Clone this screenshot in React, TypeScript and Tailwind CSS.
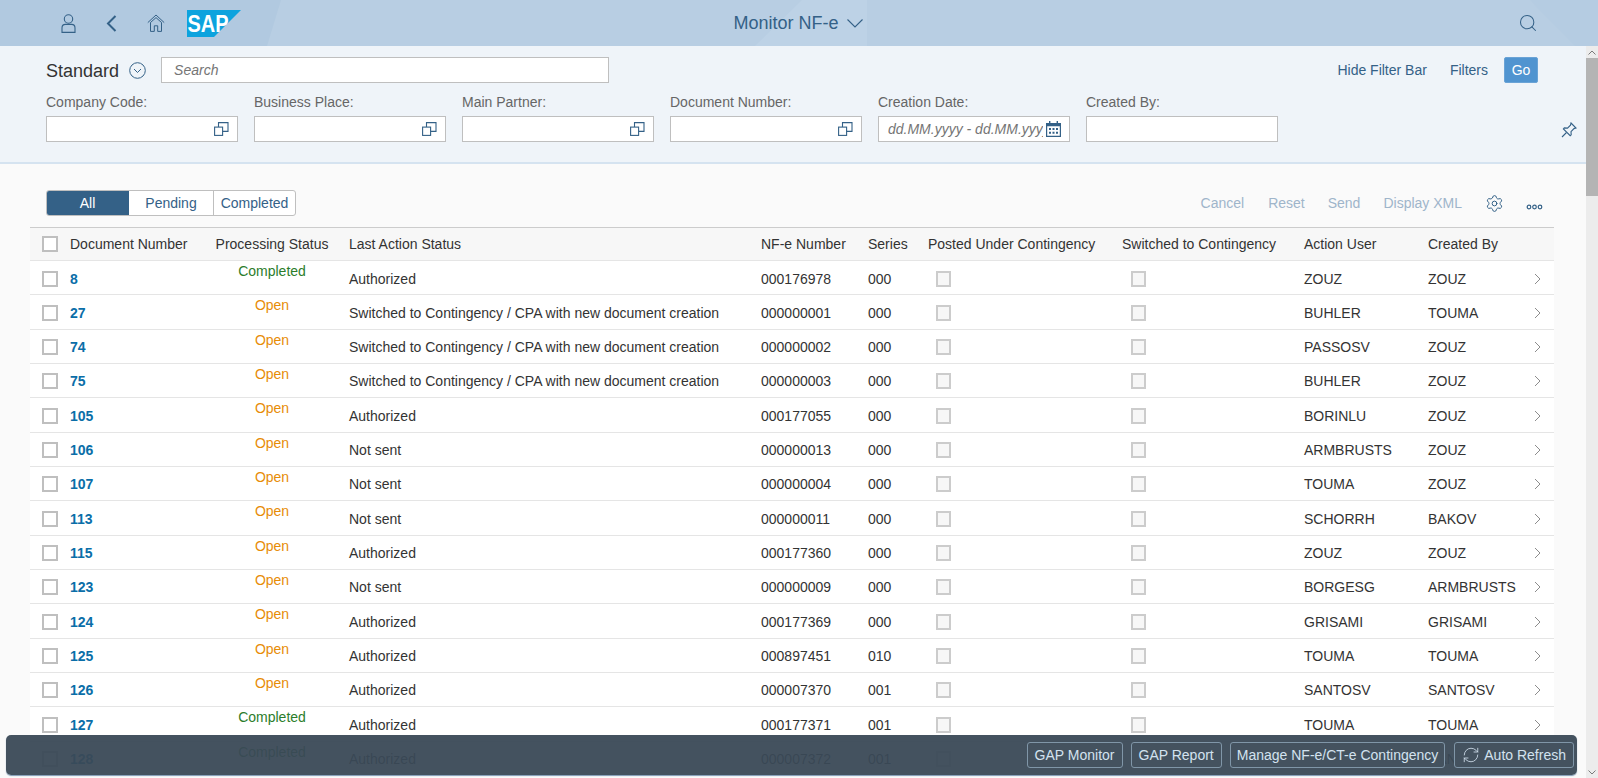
import { RefreshCw, Search, Settings } from 'lucide-react';

interface Row {
  doc: string;
  status: 'Open' | 'Completed';
  action: string;
  nfe: string;
  series: string;
  user: string;
  createdBy: string;
}

const CONT = 'Switched to Contingency / CPA with new document creation';

const rows: Row[] = [
  { doc: '8', status: 'Completed', action: 'Authorized', nfe: '000176978', series: '000', user: 'ZOUZ', createdBy: 'ZOUZ' },
  { doc: '27', status: 'Open', action: CONT, nfe: '000000001', series: '000', user: 'BUHLER', createdBy: 'TOUMA' },
  { doc: '74', status: 'Open', action: CONT, nfe: '000000002', series: '000', user: 'PASSOSV', createdBy: 'ZOUZ' },
  { doc: '75', status: 'Open', action: CONT, nfe: '000000003', series: '000', user: 'BUHLER', createdBy: 'ZOUZ' },
  { doc: '105', status: 'Open', action: 'Authorized', nfe: '000177055', series: '000', user: 'BORINLU', createdBy: 'ZOUZ' },
  { doc: '106', status: 'Open', action: 'Not sent', nfe: '000000013', series: '000', user: 'ARMBRUSTS', createdBy: 'ZOUZ' },
  { doc: '107', status: 'Open', action: 'Not sent', nfe: '000000004', series: '000', user: 'TOUMA', createdBy: 'ZOUZ' },
  { doc: '113', status: 'Open', action: 'Not sent', nfe: '000000011', series: '000', user: 'SCHORRH', createdBy: 'BAKOV' },
  { doc: '115', status: 'Open', action: 'Authorized', nfe: '000177360', series: '000', user: 'ZOUZ', createdBy: 'ZOUZ' },
  { doc: '123', status: 'Open', action: 'Not sent', nfe: '000000009', series: '000', user: 'BORGESG', createdBy: 'ARMBRUSTS' },
  { doc: '124', status: 'Open', action: 'Authorized', nfe: '000177369', series: '000', user: 'GRISAMI', createdBy: 'GRISAMI' },
  { doc: '125', status: 'Open', action: 'Authorized', nfe: '000897451', series: '010', user: 'TOUMA', createdBy: 'TOUMA' },
  { doc: '126', status: 'Open', action: 'Authorized', nfe: '000007370', series: '001', user: 'SANTOSV', createdBy: 'SANTOSV' },
  { doc: '127', status: 'Completed', action: 'Authorized', nfe: '000177371', series: '001', user: 'TOUMA', createdBy: 'TOUMA' },
  { doc: '128', status: 'Completed', action: 'Authorized', nfe: '000007372', series: '001', user: 'SANTOSV', createdBy: 'SANTOSV' },
];

const gridCols =
  'grid grid-cols-[40px_140px_124px_427px_107px_60px_194px_182px_124px_104px_22px] items-center';

function ValueHelpIcon() {
  return (
    <svg width="15" height="14" viewBox="0 0 15 14" fill="none" stroke="#346187" strokeWidth="1.1">
      <rect x="0.6" y="5.1" width="8" height="8.3" />
      <path d="M4.5 5V0.6H14V9.4H8.6" />
    </svg>
  );
}

function Checkbox({ disabled }: { disabled?: boolean }) {
  return (
    <span
      className={
        disabled
          ? 'block w-[15px] h-[16px] border-2 border-[#cccccc] bg-[#f7f7f7]'
          : 'block w-[16px] h-[16px] border-2 border-[#bfbfbf] bg-white'
      }
    />
  );
}

function FilterField({ label, placeholder, help, calendar }: { label: string; placeholder?: string; help?: boolean; calendar?: boolean }) {
  return (
    <div className="w-[192px]">
      <div className="h-[22px] text-sm leading-4 text-[#666666]">{label}</div>
      <div className="h-[26px] flex items-center bg-white border border-[#bfbfbf] pl-[9px] pr-[8px]">
        <span className="flex-1 min-w-0 text-sm italic text-[#757575] whitespace-nowrap overflow-hidden">{placeholder}</span>
        {help && <ValueHelpIcon />}
        {calendar && (
          <svg className="shrink-0 ml-[3px]" width="15" height="16" viewBox="0 0 15 16" fill="#346187">
            <path d="M3 0h1.4v2h6.2V0H12v2h3v14H0V2h3zM1.2 5.2v9.6h12.6V5.2z" />
            <path d="M3 7h2v2H3zM6.5 7h2v2h-2zM10 7h2v2h-2zM3 10.8h2v2H3zM6.5 10.8h2v2h-2zM10 10.8h2v2h-2z" />
          </svg>
        )}
      </div>
    </div>
  );
}

function FooterButton({ children, className }: { children: React.ReactNode; className: string }) {
  return (
    <button className={`h-[26px] flex items-center rounded-[3px] border border-[#8096a8] bg-[#44525f] text-sm text-[#d3e2ef] whitespace-nowrap ${className}`}>
      {children}
    </button>
  );
}

export default function App() {
  return (
    <div className="relative h-[778px] w-[1598px] overflow-hidden flex flex-col bg-[#fafafa] font-['Liberation_Sans',Arial,sans-serif] text-sm text-[#333333]">
      <header className="relative h-[46px] shrink-0 grid grid-cols-[1fr_auto_1fr] items-center bg-[#b8cee3] text-[#346187]">
        <svg className="absolute inset-0" width="1598" height="46" viewBox="0 0 1598 46">
          <polygon points="0,0 281,0 267,46 0,46" fill="#b1c9e0" />
          <polygon points="802,0 867,0 867,46 755,46" fill="#bdd2e6" />
          <polygon points="1530,0 1598,0 1598,46 1575,46" fill="#b5cce2" />
        </svg>
        <div className="relative flex items-center h-full">
          <svg className="ml-[61px]" width="15" height="19" viewBox="0 0 15 19" fill="none" stroke="#346187" strokeWidth="1.1">
            <circle cx="7.5" cy="5" r="4.2" />
            <path d="M1 18.4V14c0-2 1.4-3.6 3.4-3.6h6.2c2 0 3.4 1.6 3.4 3.6v4.4z" />
          </svg>
          <svg className="ml-[30px]" width="11" height="17" viewBox="0 0 11 17" fill="none" stroke="#346187" strokeWidth="2">
            <path d="M9.5 1L2 8.5l7.5 7.5" />
          </svg>
          <svg className="ml-[30px]" width="18" height="18" viewBox="0 0 18 18" fill="none" stroke="#346187" strokeWidth="1">
            <path d="M0.8 8.6L9 1l8.2 7.6" />
            <path d="M3.2 8.8l5.8-5.2 5.8 5.2" />
            <path d="M3.5 9v8.4h3.8v-5.6h3.4v5.6h3.8V9" />
          </svg>
          <svg className="ml-[22px]" width="54" height="27" viewBox="0 0 54 27">
            <polygon points="0,0 54,0 27,27 0,27" fill="#0da3de" />
            <text x="0.5" y="21.5" fontFamily="'Liberation Sans', Arial, sans-serif" fontWeight="700" fontSize="23" fill="#ffffff" textLength="41" lengthAdjust="spacingAndGlyphs">
              SAP
            </text>
          </svg>
        </div>
        <div className="relative flex items-center gap-[8px] text-lg mr-[2px]">
          <span>Monitor NF-e</span>
          <svg width="16" height="9" viewBox="0 0 16 9" fill="none" stroke="#346187" strokeWidth="1.1">
            <path d="M0.5 0.5L8 8l7.5-7.5" />
          </svg>
        </div>
        <div className="relative flex justify-end pr-[60px]">
          <Search size={20} strokeWidth={1.25} color="#346187" />
        </div>
      </header>

      <div className="flex flex-1 min-h-0">
        <div className="w-[1586px] shrink-0 flex flex-col">
          <section className="h-[118px] shrink-0 bg-[#eff4f9] border-b-2 border-[#d5e3f0] pl-[46px] pt-[11px]">
            <div className="flex items-center h-[26px]">
              <span className="text-lg text-[#333333] mt-px">Standard</span>
              <svg className="ml-[10px]" width="17" height="17" viewBox="0 0 17 17" fill="none" stroke="#346187" strokeWidth="1">
                <circle cx="8.5" cy="8.5" r="7.8" />
                <path d="M5 7l3.5 3.5L12 7" />
              </svg>
              <div className="ml-[15px] w-[448px] h-[26px] flex items-center bg-white border border-[#bfbfbf] pl-[12px] text-sm italic text-[#757575]">
                Search
              </div>
              <div className="ml-auto flex items-center text-[#346187]">
                <span>Hide Filter Bar</span>
                <span className="ml-[23px]">Filters</span>
                <button className="ml-[16px] mr-[48px] w-[34px] h-[26px] rounded-[2px] bg-[#5094d0] border border-[#6aa3d6] text-white">
                  Go
                </button>
              </div>
            </div>
            <div className="flex items-start mt-[11px] gap-4">
              <FilterField label="Company Code:" help />
              <FilterField label="Business Place:" help />
              <FilterField label="Main Partner:" help />
              <FilterField label="Document Number:" help />
              <FilterField label="Creation Date:" placeholder="dd.MM.yyyy - dd.MM.yyyy" calendar />
              <FilterField label="Created By:" />
              <svg className="ml-auto mr-[9px] mt-[28px]" width="16" height="16" viewBox="0 0 16 16" fill="none" stroke="#346187" strokeWidth="1.1">
                <path d="M10 1l5 5-2 .6-3 3 .2 3.2-1 .9-6.8-6.8.9-1 3.2.2 3-3z" />
                <path d="M5.5 10.5L1 15" />
              </svg>
            </div>
          </section>

          <div className="flex-1 min-h-0 pl-[30px] pr-[32px]">
            <div className="h-[63px] flex items-start pt-[26px]">
              <div className="ml-[16px] flex h-[26px] rounded-[3px] border border-[#bfbfbf] bg-white text-[#346187] overflow-hidden">
                <span className="w-[83px] flex items-center justify-center bg-[#346187] text-white -my-px -ml-px">All</span>
                <span className="w-[84px] flex items-center justify-center">Pending</span>
                <span className="w-[82px] flex items-center justify-center border-l border-[#bfbfbf]">Completed</span>
              </div>
              <div className="ml-auto h-[26px] flex items-center text-[#9fb5ca]">
                <span>Cancel</span>
                <span className="ml-[24px]">Reset</span>
                <span className="ml-[23px]">Send</span>
                <span className="ml-[23px]">Display XML</span>
                <Settings className="ml-[23px]" size={19} strokeWidth={1.25} color="#346187" />
                <svg className="ml-[22px] mr-[11px] mt-[8px]" width="17" height="6" viewBox="0 0 17 6" fill="none" stroke="#346187" strokeWidth="1.2">
                  <circle cx="3" cy="3" r="1.8" />
                  <circle cx="8.5" cy="3" r="1.8" />
                  <circle cx="14" cy="3" r="1.8" />
                </svg>
              </div>
            </div>

            <div className={`${gridCols} h-[34px] bg-[#f7f7f7] border-t border-[#cccccc] border-b border-b-[#e5e5e5]`}>
              <span className="pl-[12px]"><Checkbox /></span>
              <span>Document Number</span>
              <span className="text-center">Processing Status</span>
              <span className="pl-[15px]">Last Action Status</span>
              <span>NF-e Number</span>
              <span>Series</span>
              <span>Posted Under Contingency</span>
              <span>Switched to Contingency</span>
              <span>Action User</span>
              <span>Created By</span>
              <span />
            </div>

            {rows.map((row) => (
              <div key={row.doc} className={`${gridCols} h-[34.33px] pb-[1.5px] bg-white border-b border-[#e5e5e5]`}>
                <span className="pl-[12px]"><Checkbox /></span>
                <span className="font-bold text-[#0a6ea8]">{row.doc}</span>
                <span className={row.status === 'Open' ? 'text-center pb-[15px] text-[#e78c07]' : 'text-center pb-[15px] text-[#2b7d2b]'}>
                  {row.status}
                </span>
                <span className="pl-[15px]">{row.action}</span>
                <span>{row.nfe}</span>
                <span>{row.series}</span>
                <span className="pl-[8px]"><Checkbox disabled /></span>
                <span className="pl-[9px]"><Checkbox disabled /></span>
                <span>{row.user}</span>
                <span>{row.createdBy}</span>
                <svg width="7" height="12" viewBox="0 0 7 12" className="ml-[2px]" fill="none" stroke="#8c8c8c" strokeWidth="1">
                  <path d="M1 1l5 5-5 5" />
                </svg>
              </div>
            ))}
          </div>
        </div>

        <div className="w-[12px] shrink-0 flex flex-col bg-[#ececec]">
          <div className="h-[12px] flex items-center justify-center">
            <svg width="8" height="5" viewBox="0 0 8 5" fill="none" stroke="#7a7a7a"><path d="M0.5 4.5L4 1l3.5 3.5" /></svg>
          </div>
          <div className="h-[138px] bg-[#b4b4b4]" />
          <div className="mt-auto h-[12px] flex items-center justify-center">
            <svg width="8" height="5" viewBox="0 0 8 5" fill="none" stroke="#7a7a7a"><path d="M0.5 0.5L4 4l3.5-3.5" /></svg>
          </div>
        </div>
      </div>

      <div className="absolute left-[6px] bottom-[3px] w-[1571px] h-[40px] rounded-[5px] bg-[#3a4956]/95 shadow-[0_1px_1px_#7f9bb5] flex items-center justify-end gap-[8px] pr-[3px]">
        <FooterButton className="px-[7px]">GAP Monitor</FooterButton>
        <FooterButton className="px-[7px]">GAP Report</FooterButton>
        <FooterButton className="px-[6px]">Manage NF-e/CT-e Contingency</FooterButton>
        <FooterButton className="px-[7px] gap-[4px] ml-[1px]">
          <RefreshCw size={18} strokeWidth={1.1} />
          Auto Refresh
        </FooterButton>
      </div>
    </div>
  );
}
